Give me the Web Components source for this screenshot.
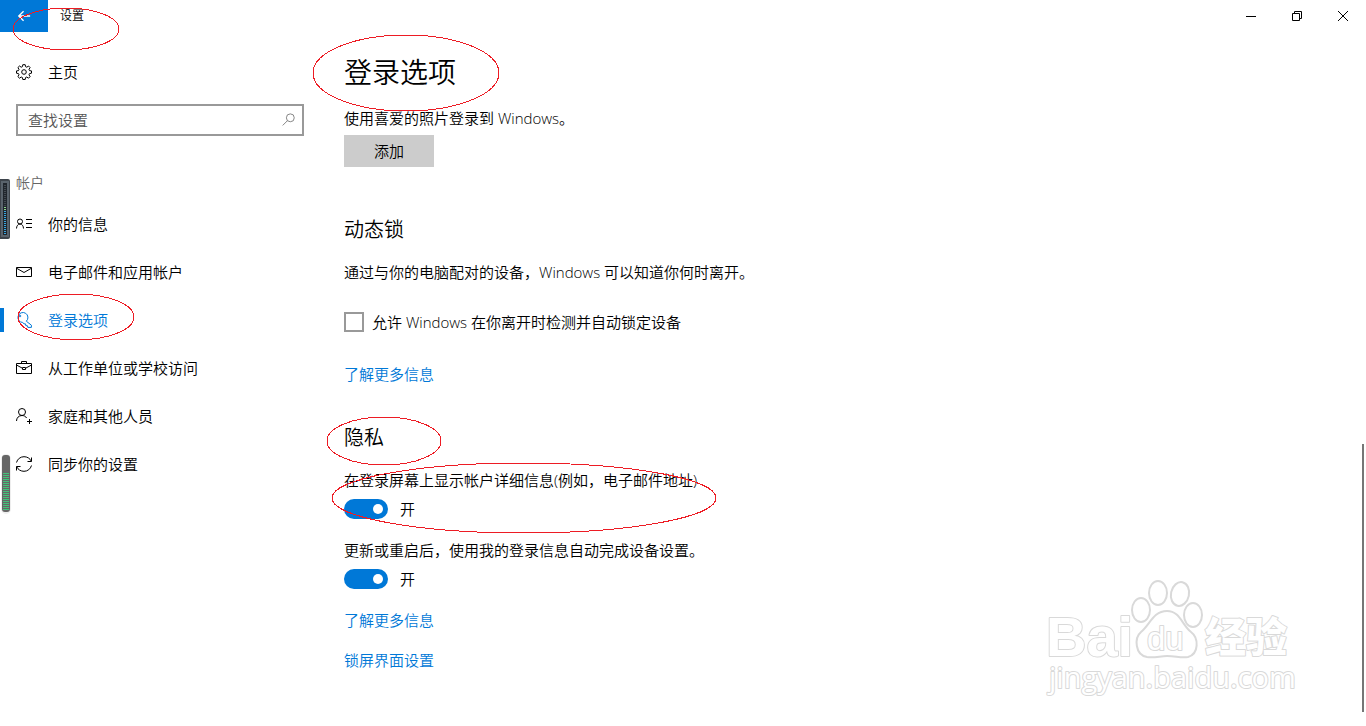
<!DOCTYPE html>
<html lang="zh-CN">
<head>
<meta charset="utf-8">
<meta name="viewport" content="width=device-width, initial-scale=1">
<title>设置</title>
<style>
    body {
        margin: 0;
        min-height: 100vh;
        position: relative;
        overflow: hidden;
        background: #fff;
        color: #000;
        font: 350 15px/20px "Open Sans", "Noto Sans CJK SC", sans-serif;
    }
</style>
</head>
<body>
<settings-app>
    <title-bar slot="title">设置</title-bar>

    <settings-nav slot="nav">
        <nav-item icon="gear" slot="home">主页</nav-item>
        <search-box slot="search" placeholder="查找设置"></search-box>
        <span slot="heading">帐户</span>
        <nav-item icon="info">你的信息</nav-item>
        <nav-item icon="mail">电子邮件和应用帐户</nav-item>
        <nav-item icon="key" active>登录选项</nav-item>
        <nav-item icon="case">从工作单位或学校访问</nav-item>
        <nav-item icon="people">家庭和其他人员</nav-item>
        <nav-item icon="sync">同步你的设置</nav-item>
    </settings-nav>

    <sign-in-options></sign-in-options>
</settings-app>
<edge-gadgets></edge-gadgets>
<scroll-indicator></scroll-indicator>
<site-watermark></site-watermark>
<pen-marks></pen-marks>

<script>
const icons = {
    gear: `<circle cx="8" cy="8" r="2.3"/>
        <path d="M6.8 .7h2.400l.4 2 1.200.5 1.700-1.200 1.600 1.600-1.100 1.700.5 1.300 2 .3v2.300l-2 .4-.5 1.200 1.100 1.800-1.600 1.600-1.700-1.200-1.200.5-.4 2H6.800l-.4-2-1.200-.5L3.500 14.200 1.900 12.600 3 10.800l-.5-1.200-2-.4V6.900l2-.3.5-1.300-1.100-1.700L3.500 2l1.700 1.200 1.200-.5z"/>`,
    info: `<circle cx="4" cy="5.500" r="2.500"/><path d="M.5 12.500C.5 10 2 8 4 8s3.500 2 3.500 4.500M10 3.500h6M10 7.500h6M10 11.500h6"/>`,
    mail: `<path d="M.5 3.500h15v9H.5zM.5 4.200 8 8.500l7.500-4.300"/>`,
    key: `<path d="M10.300 9.200A5 5 0 1 0 6.700 10.500L8 11.800l1.500.1.300 1.700 1.700.2.300 1.600h3.600v-2.200z"/><circle cx="4" cy="4" r=".8"/>`,
    case: `<path d="M.5 3.500h15v10H.5zM5.500 3.500v-2h5v2M.5 5l5.500 3M15.500 5 10 8M6.500 7.500h3v2h-3z"/>`,
    people: `<circle cx="6" cy="4" r="3.500"/><path d="M.5 13C.5 9.800 2.800 7.500 6 7.500c2 0 3.700.9 4.600 2.500M13.500 11v5M11 13.500h5"/>`,
    sync: `<path d="M.5 6.500C1.500 3 4.300.7 8 .7c3.200 0 6 1.700 7.300 4.500M15.500 1.500v4h-4M15.500 9.500C14.500 13 11.700 15.300 8 15.300c-3.200 0-6-1.700-7.300-4.500M.5 14.500v-4h4"/>`,
    search: `<circle cx="9.500" cy="5.500" r="4.500"/><path d="M6.300 8.700.8 14.200"/>`,
    back: `<path stroke-width="1.500" d="M15 8H2M7.500 2.500 2 8l5.500 5.500"/>`
};

const svg = (name, size = 16) => `
    <svg width="${size}" height="${size}" viewBox="0 0 16 16" fill="none" stroke="currentColor" aria-hidden="true">${icons[name]}</svg>
`;

class SettingsApp extends HTMLElement {

    constructor() {
        super();
        this.attachShadow({mode: 'open'}).innerHTML = `
            <style>
                :host {
                    display: grid;
                    grid-template: auto 1fr / 320px minmax(0, 1fr);
                    min-height: 100vh;
                }
                header {
                    grid-column: 1 / -1;
                }
                main {
                    padding: 22px 24px;
                }
            </style>
            <header><slot name="title"></slot></header>
            <aside><slot name="nav"></slot></aside>
            <main><slot></slot></main>
        `;
    }
}

class TitleBar extends HTMLElement {

    constructor() {
        super();
        this.attachShadow({mode: 'open'}).innerHTML = `
            <style>
                :host {
                    display: flex;
                    height: 32px;
                    font-size: 12px;
                }
                button {
                    display: grid;
                    place-items: center;
                    width: 46px;
                    padding: 0;
                    border: none;
                    background: none;
                    color: #000;
                }
                .back {
                    width: 48px;
                    background: #0078d7;
                    color: #fff;
                }
                h1 {
                    flex: 1;
                    margin: 0;
                    padding: 6px 12px;
                    font: inherit;
                    line-height: 20px;
                }
            </style>
            <button class="back" aria-label="返回">${svg('back', 14)}</button>
            <h1><slot></slot></h1>
            <button aria-label="最小化">
                <svg width="10" height="10" stroke="#000"><path d="M0 5.500h10"/></svg>
            </button>
            <button aria-label="还原">
                <svg width="10" height="10" fill="none" stroke="#000"><path d="M.5 2.500h7v7h-7zM2.500 2.500v-2h7v7h-2"/></svg>
            </button>
            <button aria-label="关闭">
                <svg width="10" height="10" stroke="#000"><path d="M0 0l10 10M10 0 0 10"/></svg>
            </button>
        `;
    }
}

class SettingsNav extends HTMLElement {

    constructor() {
        super();
        this.attachShadow({mode: 'open'}).innerHTML = `
            <style>
                :host {
                    display: block;
                    padding-top: 16px;
                }
                h2 {
                    margin: 37px 16px 7px;
                    color: #666;
                    font: inherit;
                    font-size: 14px;
                    line-height: 20px;
                }
            </style>
            <slot name="home"></slot>
            <slot name="search"></slot>
            <h2><slot name="heading"></slot></h2>
            <nav><slot></slot></nav>
        `;
    }
}

class NavItem extends HTMLElement {

    constructor() {
        super();
        this.attachShadow({mode: 'open'}).innerHTML = `
            <style>
                :host {
                    display: block;
                }
                a {
                    display: flex;
                    align-items: center;
                    gap: 16px;
                    height: 48px;
                    padding: 0 16px;
                    color: inherit;
                    text-decoration: none;
                }
                :host([active]) a {
                    color: #0078d7;
                    background: linear-gradient(#0078d7, #0078d7) left / 4px 24px no-repeat;
                }
            </style>
            <a href="#">${svg(this.getAttribute('icon'))}<span><slot></slot></span></a>
        `;
    }
}

class SearchBox extends HTMLElement {

    constructor() {
        super();
        this.attachShadow({mode: 'open'}).innerHTML = `
            <style>
                :host {
                    display: block;
                    margin: 8px 16px 0;
                }
                label {
                    display: flex;
                    align-items: center;
                    box-sizing: border-box;
                    height: 32px;
                    padding: 0 6px 0 10px;
                    border: 2px solid #999;
                    color: #767676;
                }
                input {
                    flex: 1;
                    min-width: 0;
                    padding: 0;
                    border: none;
                    outline: none;
                    background: none;
                    font: inherit;
                }
                input::placeholder {
                    color: #555;
                }
            </style>
            <label>
                <input type="text" aria-label="${this.getAttribute('placeholder')}" placeholder="${this.getAttribute('placeholder')}">
                ${svg('search', 14)}
            </label>
        `;
    }
}

class ToggleSwitch extends HTMLElement {

    constructor() {
        super();
        this.attachShadow({mode: 'open'}).innerHTML = `
            <style>
                :host {
                    display: block;
                }
                .caption {
                    display: block;
                    margin-bottom: 9px;
                }
                .row {
                    display: flex;
                    gap: 12px;
                }
                input {
                    appearance: none;
                    display: flex;
                    align-items: center;
                    box-sizing: border-box;
                    width: 44px;
                    height: 20px;
                    margin: 0;
                    padding: 0 5px;
                    border-radius: 10px;
                    background: #999;
                }
                input::before {
                    content: "";
                    width: 10px;
                    height: 10px;
                    border-radius: 50%;
                    background: #fff;
                }
                input:checked {
                    justify-content: flex-end;
                    background: #0078d7;
                }
            </style>
            <label class="caption" for="switch"><slot></slot></label>
            <div class="row">
                <input type="checkbox" role="switch" id="switch" checked>
                <span id="state">开</span>
            </div>
        `;
        const input = this.shadowRoot.querySelector('#switch');
        input.addEventListener('change', () => {
            this.shadowRoot.querySelector('#state').textContent = input.checked ? '开' : '关';
        });
    }
}

class SignInOptions extends HTMLElement {

    constructor() {
        super();
        this.attachShadow({mode: 'open'}).innerHTML = `
            <style>
                :host {
                    display: block;
                }
                h1, h2 {
                    margin: 0;
                    font-weight: inherit;
                }
                h1 {
                    margin-bottom: 18px;
                    font-size: 28px;
                    line-height: 36px;
                }
                h2 {
                    margin-bottom: 18px;
                    font-size: 20px;
                    line-height: 28px;
                }
                p {
                    margin: 0;
                }
                section {
                    margin-bottom: 40px;
                }
                section:last-child {
                    margin-bottom: 0;
                }
                .picture {
                    margin-bottom: 49px;
                }
                button {
                    width: 90px;
                    height: 32px;
                    margin-top: 7px;
                    padding: 0;
                    border: none;
                    background: #ccc;
                    color: inherit;
                    font: inherit;
                }
                .check {
                    display: flex;
                    gap: 8px;
                    margin: 30px 0 32px;
                }
                .check input {
                    appearance: none;
                    box-sizing: border-box;
                    width: 20px;
                    height: 20px;
                    margin: 0;
                    border: 2px solid #999;
                }
                .check input:checked {
                    background: #0078d7;
                }
                a {
                    display: table;
                    margin-bottom: 20px;
                    color: #0078d7;
                    text-decoration: none;
                }
                toggle-switch {
                    margin-bottom: 21px;
                }
            </style>
            <h1>登录选项</h1>
            <section class="picture">
                <p>使用喜爱的照片登录到 Windows。</p>
                <button>添加</button>
            </section>
            <section>
                <h2>动态锁</h2>
                <p>通过与你的电脑配对的设备，Windows 可以知道你何时离开。</p>
                <label class="check"><input type="checkbox">允许 Windows 在你离开时检测并自动锁定设备</label>
                <a href="#">了解更多信息</a>
            </section>
            <section>
                <h2>隐私</h2>
                <toggle-switch>在登录屏幕上显示帐户详细信息(例如，电子邮件地址)</toggle-switch>
                <toggle-switch>更新或重启后，使用我的登录信息自动完成设备设置。</toggle-switch>
                <a href="#">了解更多信息</a>
                <a href="#">锁屏界面设置</a>
            </section>
        `;
    }
}

// small desktop meters that float over the left edge of the window
class EdgeGadgets extends HTMLElement {

    constructor() {
        super();
        this.attachShadow({mode: 'open'}).innerHTML = `
            <style>
                :host {
                    position: absolute;
                    left: 0;
                    top: 179px;
                    pointer-events: none;
                }
                svg {
                    display: block;
                }
                path {
                    shape-rendering: crispEdges;
                }
            </style>
            <svg width="14" height="340" aria-hidden="true">
                <rect x="-3" width="13" height="60" rx="2" fill="#3d444b"/>
                <rect x="1" y="2" width="8" height="56" fill="#59636c"/>
                <rect x="3" y="4" width="4" height="52" fill="#20262d"/>
                <path d="M5 6v22" stroke="#444b52" stroke-width="2" stroke-dasharray="1 1"/>
                <path d="M5 28v4" stroke="#8bd38b" stroke-width="2" stroke-dasharray="1 1"/>
                <path d="M5 32v23" stroke="#3aa6e0" stroke-width="2" stroke-dasharray="1 1"/>
                <rect x="1" y="275" width="10" height="60" rx="5" fill="#eee"/>
                <rect x="2" y="276" width="8" height="57" rx="3" fill="#666"/>
                <path d="M6 294v37" stroke="#42c37a" stroke-width="6" stroke-dasharray="1 1"/>
            </svg>
        `;
    }
}

class ScrollIndicator extends HTMLElement {

    constructor() {
        super();
        this.attachShadow({mode: 'open'}).innerHTML = `
            <style>
                :host {
                    position: absolute;
                    right: 2px;
                    bottom: 14px;
                    width: 2px;
                    height: 268px;
                    background: #767676;
                }
            </style>
        `;
    }
}

class SiteWatermark extends HTMLElement {

    constructor() {
        super();
        this.attachShadow({mode: 'open'}).innerHTML = `
            <style>
                :host {
                    position: absolute;
                    right: 66px;
                    bottom: 20px;
                    pointer-events: none;
                }
                svg {
                    display: block;
                    fill: #fff;
                    stroke: #d9d9d9;
                    stroke-width: 2;
                    stroke-linejoin: round;
                }
                text {
                    paint-order: stroke;
                }
                .latin {
                    font: 700 56px "Liberation Sans", sans-serif;
                }
                .du {
                    font: 400 33px "Liberation Sans", sans-serif;
                }
                .cjk {
                    font: 900 41px "Noto Sans CJK SC", sans-serif;
                }
                .site {
                    font: 400 29px "Open Sans", sans-serif;
                }
            </style>
            <svg width="260" height="130" viewBox="0 0 260 130" aria-hidden="true">
                <text class="latin" x="6" y="80">Bai</text>
                <ellipse cx="101" cy="34" rx="9" ry="12"/>
                <ellipse cx="118" cy="17" rx="9" ry="12"/>
                <ellipse cx="140" cy="18" rx="9" ry="12" transform="rotate(12 140 18)"/>
                <ellipse cx="153" cy="39" rx="9" ry="12"/>
                <path d="M127 35C113 35 110 49 101 56C94 62 95 79 107 81C115 82 120 80 127 80C136 80 140 82 148 81C159 78 159 62 151 56C142 49 140 35 127 35Z"/>
                <text class="du" x="107" y="74">du</text>
                <text class="cjk" x="165" y="76">经验</text>
                <text class="site" x="9" y="112">jingyan.baidu.com</text>
            </svg>
        `;
    }
}

// red ellipses drawn by hand over the window
class PenMarks extends HTMLElement {

    constructor() {
        super();
        this.attachShadow({mode: 'open'}).innerHTML = `
            <style>
                :host {
                    position: absolute;
                    inset: 0;
                    pointer-events: none;
                }
                svg {
                    display: block;
                    fill: none;
                    stroke: #ed1c24;
                    shape-rendering: crispEdges;
                }
            </style>
            <svg width="100%" height="100%" aria-hidden="true">
                <ellipse cx="66" cy="29" rx="53" ry="21"/>
                <ellipse cx="406" cy="73" rx="93" ry="38"/>
                <ellipse cx="76" cy="317" rx="58" ry="23"/>
                <ellipse cx="384" cy="441" rx="57" ry="24"/>
                <ellipse cx="524" cy="498" rx="192" ry="35"/>
            </svg>
        `;
    }
}

customElements.define('settings-app', SettingsApp);
customElements.define('title-bar', TitleBar);
customElements.define('settings-nav', SettingsNav);
customElements.define('nav-item', NavItem);
customElements.define('search-box', SearchBox);
customElements.define('toggle-switch', ToggleSwitch);
customElements.define('sign-in-options', SignInOptions);
customElements.define('edge-gadgets', EdgeGadgets);
customElements.define('scroll-indicator', ScrollIndicator);
customElements.define('site-watermark', SiteWatermark);
customElements.define('pen-marks', PenMarks);
</script>
</body>
</html>
